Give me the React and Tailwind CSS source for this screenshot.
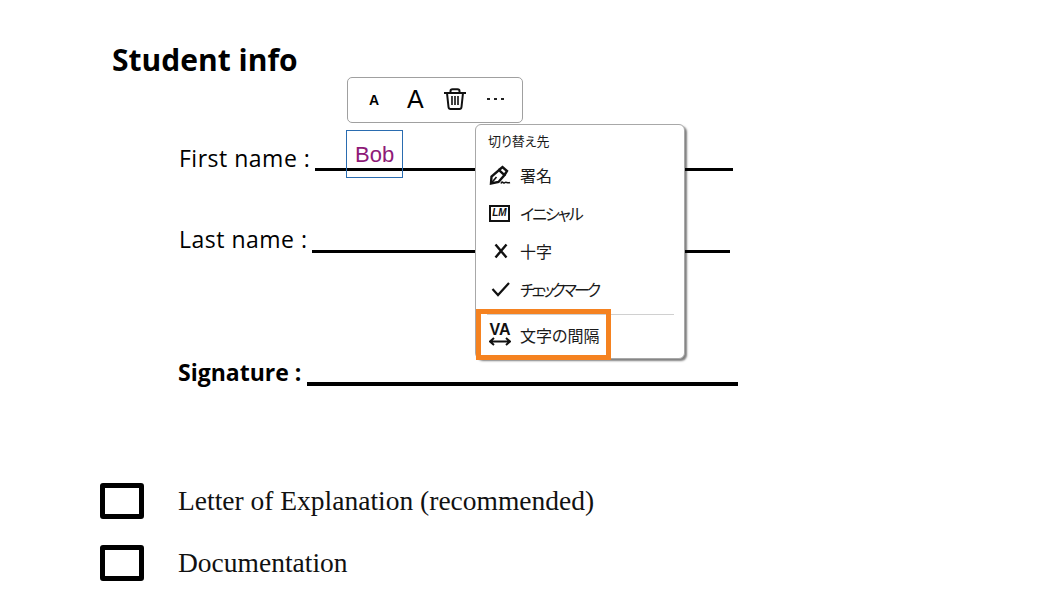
const MenuItem = ({ icon, label, className = '', textClass = '' }) => (
    <div className={`flex items-center h-[38px] pl-[13px] ${className}`}>
        <div className="w-[31px] flex items-center">{icon}</div>
        <span className={`text-[16px] text-[#1a1a1a] [font-feature-settings:'palt'] ${textClass}`}>{label}</span>
    </div>
);

const FormRow = ({ label, lineWidth, lineClass, bold, className }) => (
    <div className={`flex items-end ${className}`}>
        <span className={`text-[23px] leading-[32px] text-black whitespace-nowrap ${bold ? 'font-bold -ml-px' : 'tracking-[0.5px]'}`}>{label}</span>
        <div className={`bg-black ${lineClass}`} style={{ width: lineWidth }} />
    </div>
);

const Checkbox = ({ label, className }) => (
    <div className={`flex items-center ${className}`}>
        <div className="w-[44px] h-[36px] border-[5px] border-black rounded-[3px]" />
        <span className="ml-[34px] text-[27.5px] leading-[36px] text-[#111] font-['Liberation_Serif',serif]">{label}</span>
    </div>
);

export default function App() {
    return (
        <div className="relative w-[1058px] h-[598px] overflow-hidden bg-white font-['Open_Sans','Noto_Sans_CJK_JP',sans-serif]">
            <div className="pt-[39px] pl-[112px]">
                <h1 className="text-[30px] leading-[41px] font-bold text-black">Student info</h1>
            </div>
            <div className="pl-[179px]">
                <FormRow label="First name :" lineWidth={418} lineClass="ml-[5px] h-[3px] mb-[3px]" className="mt-[62px]" />
                <FormRow label="Last name :" lineWidth={418} lineClass="ml-[4px] h-[3px] mb-[2px]" className="mt-[49px]" />
                <FormRow label="Signature :" lineWidth={431} lineClass="ml-[6px] h-[4px] mb-[2px]" bold className="mt-[101px]" />
            </div>
            <div className="pl-[100px]">
                <Checkbox label="Letter of Explanation (recommended)" className="mt-[95px]" />
                <Checkbox label="Documentation" className="mt-[26px]" />
            </div>

            {/* Toolbar */}
            <div className="absolute left-[347px] top-[77px] w-[176px] h-[46px] bg-white border border-[#a0a0a0] rounded-[5px] text-black font-['Liberation_Sans',sans-serif]">
                <span className="absolute left-[21px] top-[14px] text-[14px] leading-[16px] font-bold">A</span>
                <span className="absolute left-[59px] top-[6px] text-[25px] leading-[30px]">A</span>
                <svg className="absolute left-[96px] top-[10px]" width="22" height="22" viewBox="0 0 22 22" fill="none" stroke="#111" strokeWidth="2">
                    <path d="M0 5 H22" />
                    <path d="M6.5 5 V3 Q6.5 1.2 8.5 1.2 H13.5 Q15.5 1.2 15.5 3 V5" />
                    <path d="M3 5 L4.5 19 Q4.7 21 6.5 21 H15.5 Q17.3 21 17.5 19 L19 5" />
                    <path d="M8 8 V17 M11 8 V17 M14 8 V17" strokeWidth="1.6" />
                </svg>
                <span className="absolute left-[139px] top-[20px] flex gap-[4px]">
                    <i className="w-[3px] h-[2px] bg-[#222]" />
                    <i className="w-[3px] h-[2px] bg-[#222]" />
                    <i className="w-[3px] h-[2px] bg-[#222]" />
                </span>
            </div>

            {/* Text field */}
            <div className="absolute left-[346px] top-[130px] w-[57px] h-[48px] border border-[#2a6cb0] pl-[8px] pt-[10px] font-['Liberation_Sans',sans-serif] text-[22px] leading-[28px] text-[#8e1a78]">Bob</div>

            {/* Menu */}
            <div className="absolute left-[475px] top-[124px] w-[210px] h-[235px] bg-white border border-[#a8a8a8] rounded-[6px] shadow-[2px_2px_2px_rgba(0,0,0,0.5)] font-['Noto_Sans_CJK_JP',sans-serif]">
                <div className="pl-[12px] pt-[7px] h-[31px] text-[13px] leading-[18px] text-[#1a1a1a] [font-feature-settings:'palt']">切り替え先</div>
                <MenuItem label="署名" icon={
                    <svg width="22" height="20" viewBox="0 0 22 20" fill="none" stroke="#111" strokeWidth="2.4">
                        <path d="M2 18.5 L2.5 11.5 L10 5 L15.5 10 L9.5 17 Z" />
                        <path d="M10 5 L13.5 2 L18 6 L15.5 10" />
                        <path d="M2 18.5 L7.5 12" strokeWidth="1.6" />
                        <path d="M12 18.5 C13.5 15 14.5 19.5 16 17.5 C17 16.5 18.5 18.5 21 17.5" strokeWidth="1.6" />
                    </svg>
                } />
                <MenuItem label="イニシャル" textClass="tracking-[-2px]" icon={
                    <div className="w-[21px] h-[17px] border-2 border-[#111] flex items-center justify-center text-[10px] leading-none font-bold italic text-[#111] font-['Liberation_Sans',sans-serif]">LM</div>
                } />
                <MenuItem label="十字" icon={
                    <svg width="16" height="16" viewBox="0 0 16 16" fill="none" stroke="#111" strokeWidth="2.4" className="ml-[4px]">
                        <path d="M2.5 1.5 L13.5 14.5 M13.5 1.5 L2.5 14.5" />
                    </svg>
                } />
                <MenuItem label="チェックマーク" textClass="tracking-[-3px]" icon={
                    <svg width="20" height="16" viewBox="0 0 20 16" fill="none" stroke="#111" strokeWidth="2.2" className="ml-[2px]">
                        <path d="M1.5 8 L7 14 L18 2" />
                    </svg>
                } />
                <div className="h-px bg-[#d0d0d0] ml-[11px] mr-[10px] mt-[6px]" />
                <MenuItem label="文字の間隔" className="mt-px" icon={
                    <div className="flex flex-col items-center w-[22px] -mt-[1px]">
                        <span className="text-[16px] leading-[14px] font-bold text-[#111] font-['Liberation_Sans',sans-serif]">VA</span>
                        <svg width="22" height="9" viewBox="0 0 22 9" fill="none" stroke="#111" strokeWidth="2">
                            <path d="M1 4.5 H21 M5 1 L1 4.5 L5 8 M17 1 L21 4.5 L17 8" />
                        </svg>
                    </div>
                } />
            </div>

            {/* Highlight */}
            <div className="absolute left-[476px] top-[309px] w-[135px] h-[51px] border-[5px] border-[#f58220]" />
        </div>
    );
}
